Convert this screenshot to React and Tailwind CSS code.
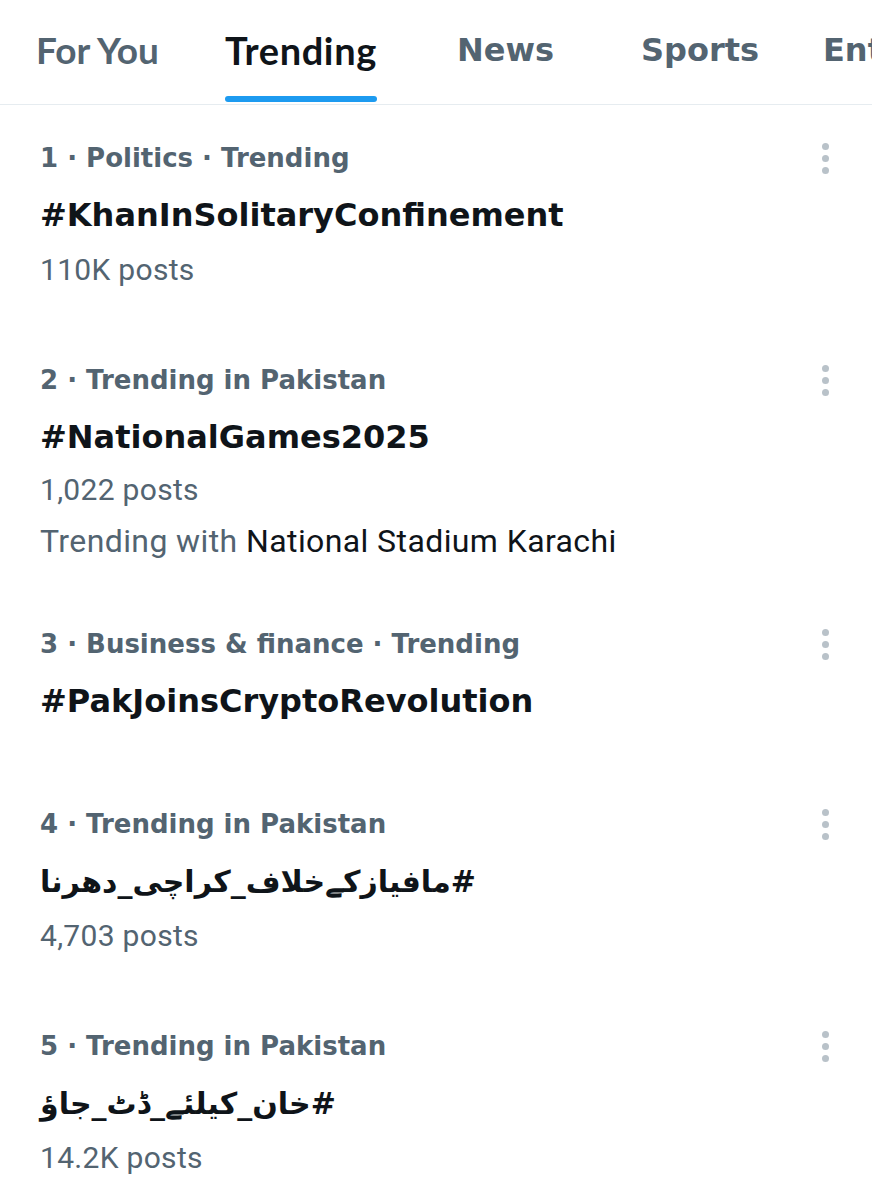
import React from 'react';

const tabs = [
  { label: 'For You', cls: "w-[189px] text-[37px] font-['Lato',sans-serif] text-[#536471]" },
  { label: 'Trending', cls: "w-[232px] text-[38px] tracking-[0.6px] font-['Lato',sans-serif] text-[#0f1419]", active: true },
  { label: 'News', cls: "w-[184px] text-[32px] font-['DejaVu_Sans',sans-serif] text-[#536471]" },
  { label: 'Sports', cls: "w-[182px] text-[32px] font-['DejaVu_Sans',sans-serif] text-[#536471]" },
  { label: 'Entertainment', cls: "w-[300px] text-[32px] font-['DejaVu_Sans',sans-serif] text-[#536471]" },
];

const trends = [
  {
    meta: '1 · Politics · Trending',
    title: '#KhanInSolitaryConfinement',
    posts: '110K posts',
    pad: 'pb-[30px]',
  },
  {
    meta: '2 · Trending in Pakistan',
    title: '#NationalGames2025',
    posts: '1,022 posts',
    with: 'National Stadium Karachi',
    pad: 'pb-[22px]',
    postsGap: 'mt-[-3px]',
  },
  {
    meta: '3 · Business & finance · Trending',
    title: '#PakJoinsCryptoRevolution',
    pad: 'pb-[42px]',
  },
  {
    meta: '4 · Trending in Pakistan',
    title: '#مافیازکےخلاف_کراچی_دھرنا',
    posts: '4,703 posts',
    rtl: true,
    pad: 'pb-[30px]',
  },
  {
    meta: '5 · Trending in Pakistan',
    title: '#خان_کیلئے_ڈٹ_جاؤ',
    posts: '14.2K posts',
    rtl: true,
    pad: 'pb-[30px]',
  },
];

const Dots = () => (
  <div className="flex flex-col items-center gap-[5px] pt-[12px]">
    <span className="block w-[7px] h-[7px] rounded-full bg-[#b9c2c9]" />
    <span className="block w-[7px] h-[7px] rounded-full bg-[#b9c2c9]" />
    <span className="block w-[7px] h-[7px] rounded-full bg-[#b9c2c9]" />
  </div>
);

const TrendRow = ({ meta, title, posts, with: withText, rtl, pad, postsGap = 'mt-[-1px]' }) => (
  <div className={`flex items-start justify-between pl-[40px] pr-[43px] pt-[26px] ${pad}`}>
    <div className="flex flex-col whitespace-nowrap">
      <div className="text-[26px] leading-[55px] font-bold text-[#536471] font-['DejaVu_Sans',sans-serif]">
        {meta}
      </div>
      {rtl ? (
        <div className="mt-[2px] text-[30px] leading-[55px] font-bold text-[#0f1419] font-['DejaVu_Sans',sans-serif]">
          <span dir="rtl">{title}</span>
        </div>
      ) : (
        <div className="mt-[2px] text-[32px] leading-[55px] font-bold text-[#0f1419] font-['DejaVu_Sans',sans-serif]">
          {title}
        </div>
      )}
      {posts && (
        <div className={`${postsGap} text-[30px] leading-[55px] tracking-[0.3px] text-[#536471] font-['Roboto',sans-serif]`}>
          {posts}
        </div>
      )}
      {withText && (
        <div className="mt-[-3px] text-[32px] leading-[55px] tracking-[0.4px] text-[#536471] font-['Roboto',sans-serif]">
          Trending with <span className="text-[#0f1419]">{withText}</span>
        </div>
      )}
    </div>
    <Dots />
  </div>
);

export default function App() {
  return (
    <div className="w-[872px] h-[1200px] overflow-hidden bg-white">
      <div className="flex h-[105px] pl-[36px] border-b border-[#e6ecf0] whitespace-nowrap overflow-hidden">
        {tabs.map((t) => (
          <div key={t.label} className={`shrink-0 h-[104px] pt-[27px] leading-[46px] font-bold ${t.cls}`}>
            <span className="inline-flex flex-col">
              {t.label}
              {t.active && <span className="mt-[23px] h-[6px] rounded-full bg-[#1d9bf0]" />}
            </span>
          </div>
        ))}
      </div>
      <div className="flex flex-col">
        {trends.map((t) => (
          <TrendRow key={t.meta} {...t} />
        ))}
      </div>
    </div>
  );
}
